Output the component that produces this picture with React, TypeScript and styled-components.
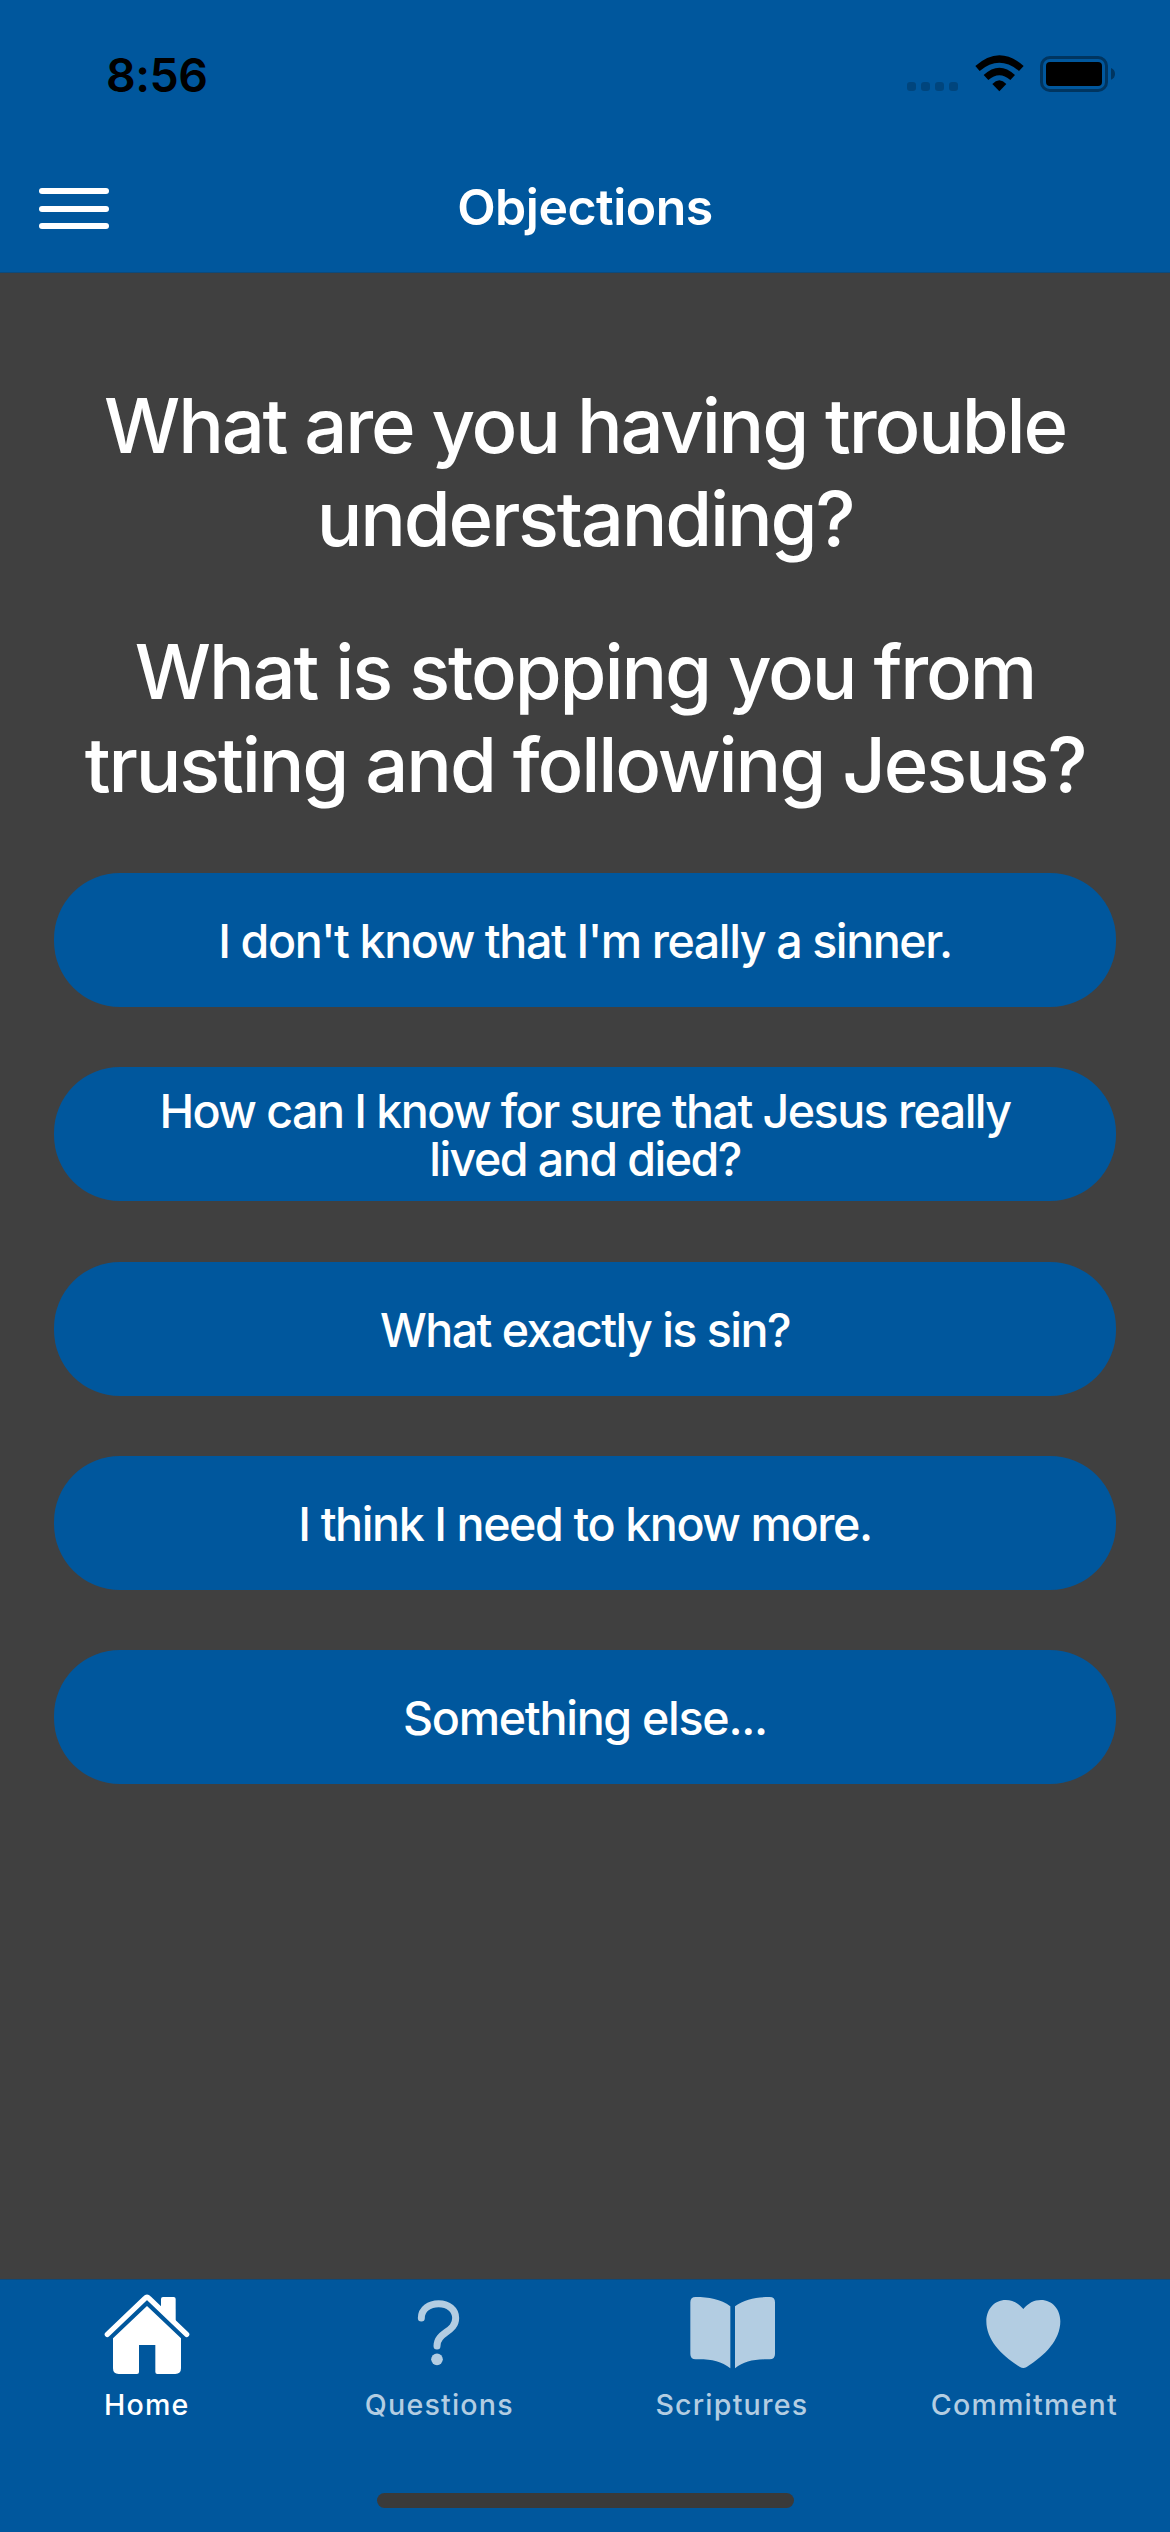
import React from "react";
import styled, { createGlobalStyle } from "styled-components";

const BLUE = "#00579d";
const GREY = "#404040";

const GlobalStyle = createGlobalStyle`
  * { box-sizing: border-box; }
  html, body { margin: 0; padding: 0; background: ${GREY}; }
  body { font-family: Inter, "Liberation Sans", sans-serif; }
`;

const Screen = styled.div`
  width: 1170px;
  height: 2532px;
  display: flex;
  flex-direction: column;
  background: ${GREY};
  color: #fff;
  overflow: hidden;
`;

const StatusBar = styled.header`
  height: 142px;
  flex: none;
  display: flex;
  justify-content: space-between;
  align-items: flex-start;
  padding: 56px 54px 0 106px;
  background: ${BLUE};
  color: #000;
`;

const Clock = styled.time`
  font-size: 46.5px;
  font-weight: 600;
  line-height: 38px;
  letter-spacing: -0.5px;
`;

const StatusIcons = styled.div`
  height: 36px;
  display: flex;
  align-items: flex-end;
`;

const SignalDots = styled.div`
  display: flex;
  gap: 5px;
  margin: 0 17px 1px 0;
`;

const Dot = styled.i`
  width: 9px;
  height: 9px;
  border-radius: 3px;
  background: rgba(0, 0, 0, 0.2);
`;

const Glyph = styled.svg`
  display: block;
  flex: none;
`;

const BatteryGlyph = styled(Glyph)`
  margin-left: 16px;
`;

const NavBar = styled.nav`
  height: 131px;
  flex: none;
  display: grid;
  grid-template-columns: 160px 1fr 160px;
  align-items: start;
  padding: 45px 0 0;
  background: ${BLUE};
  border-bottom: 1px solid #0d4a7b;
`;

const MenuButton = styled.button`
  display: flex;
  flex-direction: column;
  gap: 11.5px;
  width: 148px;
  padding: 1px 39px;
  border: 0;
  background: none;
`;

const MenuBar = styled.span`
  height: 6px;
  border-radius: 3px;
  background: #fff;
`;

const Title = styled.h1`
  margin: 0;
  text-align: center;
  font-size: 50px;
  font-weight: 600;
  line-height: 40px;
  letter-spacing: -0.5px;
`;

const Content = styled.main`
  flex: 1;
  display: flex;
  flex-direction: column;
  padding: 106px 54px 0;
`;

const Prompt = styled.h2<{ $track: number }>`
  margin: 0 0 60px;
  text-align: center;
  font-size: 76px;
  font-weight: 500;
  line-height: 93px;
  letter-spacing: ${(p) => p.$track}px;
`;

const Choices = styled.div`
  display: flex;
  flex-direction: column;
  gap: 60.3px;
  padding-top: 2px;
`;

const Choice = styled.button<{ $track: number }>`
  height: 134px;
  padding: 2px 90px 0;
  border: 0;
  border-radius: 66px;
  background: ${BLUE};
  color: #fff;
  text-align: center;
  font: 500 46.6px/48px Inter, "Liberation Sans", sans-serif;
  letter-spacing: ${(p) => p.$track}px;
`;

const TabBar = styled.footer`
  height: 253px;
  flex: none;
  display: flex;
  flex-direction: column;
  justify-content: space-between;
  align-items: center;
  padding: 13px 0 24px;
  background: ${BLUE};
  border-top: 1px solid #0d4a7b;
`;

const Tabs = styled.div`
  width: 100%;
  display: grid;
  grid-template-columns: repeat(4, 1fr);
`;

const Tab = styled.a<{ $active?: boolean }>`
  display: flex;
  flex-direction: column;
  align-items: center;
  gap: 14px;
  color: ${(p) => (p.$active ? "#fff" : "#b3cde2")};
`;

const TabIcon = styled(Glyph)`
  width: 88px;
  height: 82px;
  margin-left: 1px;
`;

const TabLabel = styled.span`
  font-size: 28.6px;
  font-weight: 500;
  line-height: 32px;
  letter-spacing: 1.2px;
  margin-right: -1.2px;
`;

const HomeIndicator = styled.div`
  width: 417px;
  height: 15px;
  border-radius: 8px;
  background: #3a3a3a;
`;

const prompts = [
  { text: "What are you having trouble understanding?", track: -2.2 },
  { text: "What is stopping you from trusting and following Jesus?", track: -2.15 },
];

const choices = [
  { text: "I don't know that I'm really a sinner.", track: -1.43 },
  { text: "How can I know for sure that Jesus really lived and died?", track: -1.57 },
  { text: "What exactly is sin?", track: -1.55 },
  { text: "I think I need to know more.", track: -1.42 },
  { text: "Something else...", track: -1.3 },
];

const HomeIcon = () => (
  <TabIcon viewBox="129 99 264 246" fill="currentColor">
    <path d="M142 223 L255 115 Q261 109 267 115 L380 223" fill="none" stroke="currentColor" strokeWidth="16" strokeLinecap="round" />
    <path d="M303 145 V117 Q303 111 309 111 H341 Q347 111 347 117 V190 Z" />
    <path d="M261 138 L363 235 V325 Q363 342 346 342 H292 Q286 342 286 336 V255 H237 V336 Q237 342 231 342 H176 Q159 342 159 325 V235 Z" />
  </TabIcon>
);

const QuestionIcon = () => (
  <TabIcon viewBox="1004 99 264 246" fill="none">
    <path d="M1083 174 C1083 147 1107 131 1135 131 C1164 131 1186 149 1186 174 C1186 218 1130 215 1130 258" stroke="currentColor" strokeWidth="21" strokeLinecap="round" />
    <circle cx="1130" cy="298" r="17.5" fill="currentColor" />
  </TabIcon>
);

const BookIcon = () => (
  <TabIcon viewBox="-134 99 264 246" fill="currentColor">
    <path d="M-7 139 C-35 117 -73 111 -111 111 Q-127 111 -127 127 V282 Q-127 298 -111 298 C-65 297 -35 303 -7 325 Z" />
    <path d="M7 139 C35 117 73 111 111 111 Q127 111 127 127 V282 Q127 298 111 298 C65 297 35 303 7 325 Z" />
  </TabIcon>
);

const HeartIcon = () => (
  <TabIcon viewBox="-130 99 264 246" fill="currentColor">
    <path d="M0 147 C14 130 32 120 53 120 C87 120 111 148 111 184 C111 240 65 287 10 321 Q0 327 -10 321 C-65 287 -111 240 -111 184 C-111 148 -87 120 -53 120 C-32 120 -14 130 0 147 Z" />
  </TabIcon>
);

const tabs = [
  { label: "Home", Icon: HomeIcon, active: true },
  { label: "Questions", Icon: QuestionIcon },
  { label: "Scriptures", Icon: BookIcon },
  { label: "Commitment", Icon: HeartIcon },
];

export default function App() {
  return (
    <>
      <GlobalStyle />
      <Screen>
        <StatusBar>
          <Clock>8:56</Clock>
          <StatusIcons>
            <SignalDots>
              <Dot />
              <Dot />
              <Dot />
              <Dot />
            </SignalDots>
            <Glyph width="49" height="38" viewBox="284 72 147 114">
              <path d="M285 108 Q357 43 430 108 L416 123 Q357 74 298 123 Z" />
              <path d="M310 135 Q357 91 404 135 L390 150 Q357 121 324 150 Z" />
              <path d="M336 162 Q357 140 378 162 L357 184 Z" />
            </Glyph>
            <BatteryGlyph width="76" height="36" viewBox="480 78 228 108">
              <rect x="484.5" y="82.5" width="195" height="99" rx="25" fill="none" stroke="#003560" strokeWidth="9" />
              <rect x="498" y="96" width="168" height="72" rx="12" />
              <path d="M693 114 Q705 119 705 132 Q705 144 693 149 Z" fill="#003560" />
            </BatteryGlyph>
          </StatusIcons>
        </StatusBar>
        <NavBar>
          <MenuButton aria-label="Menu">
            <MenuBar />
            <MenuBar />
            <MenuBar />
          </MenuButton>
          <Title>Objections</Title>
        </NavBar>
        <Content>
          {prompts.map((p) => (
            <Prompt key={p.text} $track={p.track}>{p.text}</Prompt>
          ))}
          <Choices>
            {choices.map((c) => (
              <Choice key={c.text} $track={c.track}>{c.text}</Choice>
            ))}
          </Choices>
        </Content>
        <TabBar>
          <Tabs>
            {tabs.map(({ label, Icon, active }) => (
              <Tab key={label} $active={active}>
                <Icon />
                <TabLabel>{label}</TabLabel>
              </Tab>
            ))}
          </Tabs>
          <HomeIndicator />
        </TabBar>
      </Screen>
    </>
  );
}
